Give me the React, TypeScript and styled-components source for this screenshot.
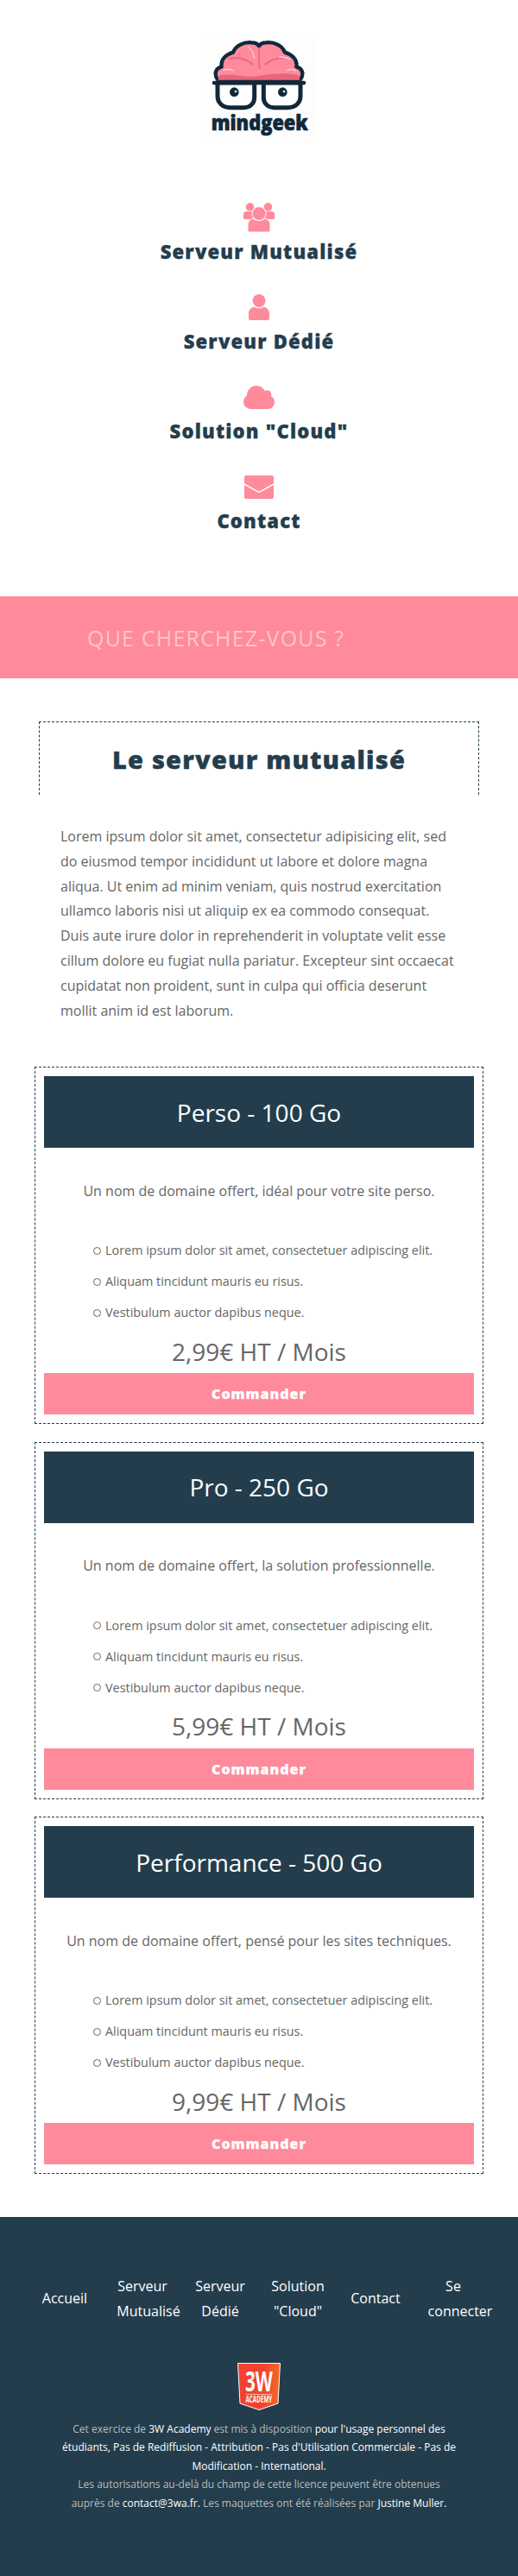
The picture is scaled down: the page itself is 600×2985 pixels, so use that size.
import React from 'react';
import styled, { createGlobalStyle } from 'styled-components';

const navy = '#233d4d';
const pink = '#fe8a9b';

const GlobalStyle = createGlobalStyle`
  * { box-sizing: border-box; }
  html, body { margin: 0; padding: 0; background: #fff; }
  body { font-family: "Open Sans", "Noto Sans", sans-serif; color: #666; font-size: 16px; }
`;

const Page = styled.div`
  width: 600px;
  height: 2985px;
  overflow: hidden;
`;

const Header = styled.header`
  padding-top: 40px;
  display: flex;
  flex-direction: column;
  align-items: center;
`;

const LogoSvg = styled.svg`
  display: block;
  width: 132px;
  height: 120px;
`;

const Nav = styled.nav`
  padding-top: 72px;
  display: flex;
  flex-direction: column;
  gap: 26px;
  align-items: center;
`;

const NavItem = styled.a`
  display: flex;
  flex-direction: column;
  align-items: center;
`;

const NavIcon = styled.div`
  height: 40px;
  display: flex;
  align-items: center;
  justify-content: center;
  svg { display: block; fill: ${pink}; }
`;

const NavLabel = styled.span`
  font-size: 22px;
  line-height: 38px;
  font-weight: 800;
  letter-spacing: 1.2px;
  -webkit-text-stroke: 0.35px ${navy};
  color: ${navy};
`;

const SearchBand = styled.div`
  margin-top: 69px;
  height: 95px;
  background: ${pink};
  display: flex;
  align-items: center;
  padding-left: 101px;
  font-size: 25px;
  letter-spacing: 1.2px;
  color: rgba(255, 255, 255, 0.5);
`;

const Main = styled.main`
  padding-top: 50px;
`;

const TitleBox = styled.div`
  margin: 0 45px;
  height: 85px;
  border: 1px dashed ${navy};
  border-bottom: none;
  display: flex;
  align-items: center;
  justify-content: center;
`;

const Title = styled.h1`
  margin: 0;
  font-size: 29px;
  font-weight: 800;
  letter-spacing: 1.2px;
  -webkit-text-stroke: 0.4px ${navy};
  color: ${navy};
`;

const Intro = styled.p`
  margin: 34px 0 0;
  padding: 0 72px 0 70px;
  line-height: 28.8px;
  color: #666;
`;

const Offers = styled.div`
  margin: 51px 40px 0;
  display: flex;
  flex-direction: column;
  gap: 20.5px;
`;

const Card = styled.article`
  border: 1px dashed ${navy};
  padding: 10px;
`;

const CardTitle = styled.h2`
  margin: 0;
  height: 83px;
  background: ${navy};
  color: #fff;
  font-size: 28px;
  font-weight: 400;
  display: flex;
  align-items: center;
  justify-content: center;
`;

const CardLead = styled.p`
  margin: 35.6px 0 0;
  line-height: 28.8px;
  text-align: center;
`;

const Features = styled.ul`
  margin: 36.6px 0 0;
  padding: 0 0 0 57px;
  list-style: none;
  font-size: 14.4px;
  line-height: 36px;
`;

const Feature = styled.li`
  display: flex;
  align-items: center;
  gap: 5px;
  &::before {
    content: '';
    width: 7px;
    height: 7px;
    border: 1px solid #666;
    border-radius: 50%;
  }
`;

const Price = styled.div`
  height: 52px;
  padding-top: 1px;
  font-size: 28px;
  display: flex;
  align-items: center;
  justify-content: center;
`;

const OrderButton = styled.button`
  display: block;
  width: 100%;
  height: 48px;
  border: none;
  background: ${pink};
  color: #fff;
  font-family: inherit;
  font-size: 16px;
  font-weight: 800;
  letter-spacing: 1px;
  -webkit-text-stroke: 0.25px #fff;
`;

const Footer = styled.footer`
  margin-top: 50px;
  height: 416px;
  background: ${navy};
  padding-top: 65.6px;
  display: flex;
  flex-direction: column;
  align-items: center;
`;

const FooterNav = styled.div`
  width: 100%;
  padding-left: 30px;
  display: grid;
  grid-template-columns: 90px 104px 62px 118px 62px 134px;
  align-items: center;
  color: #fff;
  line-height: 28.8px;
  text-align: center;
`;

const FooterLine = styled.span<{ $inset?: number }>`
  display: block;
  padding-right: ${(p) => p.$inset ?? 0}px;
  white-space: nowrap;
`;

const BadgeSvg = styled.svg`
  display: block;
  margin-top: 45px;
  width: 50px;
  height: 55px;
`;

const Legal = styled.p`
  margin: 11px 0 0;
  width: 500px;
  font-size: 12px;
  line-height: 21.6px;
  text-align: center;
  color: #bbb;
  b { font-weight: 400; color: #fff; }
`;

const Logo = () => (
  <LogoSvg viewBox="252 120 396 360">
    <rect x="252" y="120" width="396" height="360" fill="#fdfdfd" />
    <path
      d="M308 280 C292 258 298 238 320 232 C316 207 335 190 360 182 C368 160 395 145 425 148 C438 148 446 153 450 160 C454 153 462 148 475 148 C505 145 532 160 540 182 C565 190 584 207 580 232 C602 238 608 258 592 280 Z"
      fill="#fe8a9b"
      stroke="#10293a"
      strokeWidth="13"
      strokeLinejoin="round"
    />
    <path d="M312 262 C360 252 400 272 450 264 C500 256 540 252 588 262 L592 278 L308 278 Z" fill="#e8667c" />
    <path d="M450 165 C448 190 450 215 452 240 M430 225 C405 205 380 195 345 205 M470 225 C495 205 520 195 555 205" fill="none" stroke="#e8667c" strokeWidth="5" />
    <path d="M410 162 C425 170 432 185 434 205 M520 198 C535 198 548 200 558 208 M325 244 C335 240 350 240 362 246 M545 246 C555 240 570 240 580 246" fill="none" stroke="#ffd3d9" strokeWidth="4" />
    <path d="M294 288 H606" stroke="#10293a" strokeWidth="14" strokeLinecap="round" />
    <path d="M306 288 H434 V340 C434 360 418 374 398 374 H350 C324 374 306 358 306 334 Z" fill="#fff" stroke="#10293a" strokeWidth="15" strokeLinejoin="round" />
    <path d="M466 288 H594 V334 C594 358 576 374 550 374 H502 C482 374 466 360 466 340 Z" fill="#fff" stroke="#10293a" strokeWidth="15" strokeLinejoin="round" />
    <circle cx="364" cy="320" r="16" fill="#10293a" />
    <circle cx="369" cy="318" r="4" fill="#fff" />
    <circle cx="532" cy="320" r="16" fill="#10293a" />
    <circle cx="537" cy="318" r="4" fill="#fff" />
    <text transform="translate(284 452) scale(0.88 1)" textLength="382" lengthAdjust="spacingAndGlyphs" fontFamily="Open Sans, sans-serif" fontWeight="800" fontSize="72" fill="#10293a" stroke="#10293a" strokeWidth="2">
      mindgeek
    </text>
  </LogoSvg>
);

const UsersIcon = () => (
  <svg width="36" height="34" viewBox="0 0 36 34">
    <circle cx="7.5" cy="4.8" r="4.8" />
    <circle cx="28.5" cy="4.8" r="4.8" />
    <path d="M0 18 V13 C0 11 2 10 4 10 H12 V19 H1 C.4 19 0 18.6 0 18 Z" />
    <path d="M36 18 V13 C36 11 34 10 32 10 H24 V19 H35 C35.6 19 36 18.6 36 18 Z" />
    <path d="M5 32 V26 C5 21 8 19 11 18 C14 21 22 21 25 18 C28 19 31 21 31 26 V32 A2 2 0 0 1 29 34 H7 A2 2 0 0 1 5 32 Z" stroke="#fff" strokeWidth="1" />
    <circle cx="18" cy="12.5" r="8" stroke="#fff" strokeWidth="1" />
  </svg>
);

const UserIcon = () => (
  <svg width="24" height="30" viewBox="0 0 24 30">
    <circle cx="12" cy="7.5" r="7.5" />
    <path d="M0 28 V22 C0 18 3 15.5 6.5 14.5 C9 17 15 17 17.5 14.5 C21 15.5 24 18 24 22 V28 A2 2 0 0 1 22 30 H2 A2 2 0 0 1 0 28 Z" />
  </svg>
);

const CloudIcon = () => (
  <svg width="36" height="27" viewBox="0 0 36 27">
    <circle cx="15" cy="11" r="11" />
    <circle cx="27.5" cy="10" r="4.8" />
    <circle cx="8.5" cy="18.5" r="8.5" />
    <circle cx="28" cy="19" r="8" />
    <rect x="8" y="12" width="20" height="15" />
  </svg>
);

const MailIcon = () => (
  <svg width="34" height="27" viewBox="0 0 34 27">
    <rect width="34" height="27" rx="2" />
    <path d="M0 10 L15.5 18.6 Q17 19.4 18.5 18.6 L34 10" fill="none" stroke="#fff" strokeWidth="1.6" />
  </svg>
);

const Badge = () => (
  <BadgeSvg viewBox="0 0 50 55">
    <defs>
      <linearGradient id="badgeFill" x1="0" x2="1" y1="0" y2="0">
        <stop offset="0" stopColor="#f3412f" />
        <stop offset="0.6" stopColor="#f2432f" />
        <stop offset="1" stopColor="#f26a24" />
      </linearGradient>
    </defs>
    <path d="M.5 .5 H49.5 L47 47 L25 54.5 L3 47 Z" fill="url(#badgeFill)" stroke="#fff" strokeWidth="1" />
    <text transform="translate(9 33) scale(0.65 1)" textLength="49" lengthAdjust="spacingAndGlyphs" fontFamily="Open Sans, sans-serif" fontWeight="700" fontSize="32" fill="#fff">
      3W
    </text>
    <rect x="9.5" y="36" width="31" height="1" fill="#ffb9a8" />
    <text transform="translate(9.5 46) scale(0.67 1)" textLength="46" lengthAdjust="spacingAndGlyphs" fontFamily="Open Sans, sans-serif" fontWeight="700" fontSize="10" fill="#fff">
      ACADEMY
    </text>
  </BadgeSvg>
);

const navItems = [
  { icon: <UsersIcon />, label: 'Serveur Mutualisé' },
  { icon: <UserIcon />, label: 'Serveur Dédié' },
  { icon: <CloudIcon />, label: 'Solution "Cloud"' },
  { icon: <MailIcon />, label: 'Contact' },
];

const offers = [
  { title: 'Perso - 100 Go', lead: 'Un nom de domaine offert, idéal pour votre site perso.', price: '2,99€ HT / Mois' },
  { title: 'Pro - 250 Go', lead: 'Un nom de domaine offert, la solution professionnelle.', price: '5,99€ HT / Mois' },
  { title: 'Performance - 500 Go', lead: 'Un nom de domaine offert, pensé pour les sites techniques.', price: '9,99€ HT / Mois' },
];

const App: React.FC = () => (
  <Page>
    <GlobalStyle />
    <Header>
      <Logo />
    </Header>
    <Nav>
      {navItems.map((item) => (
        <NavItem key={item.label}>
          <NavIcon>{item.icon}</NavIcon>
          <NavLabel>{item.label}</NavLabel>
        </NavItem>
      ))}
    </Nav>
    <SearchBand>QUE CHERCHEZ-VOUS ?</SearchBand>
    <Main>
      <TitleBox>
        <Title>Le serveur mutualisé</Title>
      </TitleBox>
      <Intro>
        Lorem ipsum dolor sit amet, consectetur adipisicing elit, sed do eiusmod tempor incididunt ut labore et dolore
        magna aliqua. Ut enim ad minim veniam, quis nostrud exercitation ullamco laboris nisi ut aliquip ex ea commodo
        consequat. Duis aute irure dolor in reprehenderit in voluptate velit esse cillum dolore eu fugiat nulla
        pariatur. Excepteur sint occaecat cupidatat non proident, sunt in culpa qui officia deserunt mollit anim id est
        laborum.
      </Intro>
      <Offers>
        {offers.map((offer) => (
          <Card key={offer.title}>
            <CardTitle>{offer.title}</CardTitle>
            <CardLead>{offer.lead}</CardLead>
            <Features>
              <Feature>Lorem ipsum dolor sit amet, consectetuer adipiscing elit.</Feature>
              <Feature>Aliquam tincidunt mauris eu risus.</Feature>
              <Feature>Vestibulum auctor dapibus neque.</Feature>
            </Features>
            <Price>{offer.price}</Price>
            <OrderButton>Commander</OrderButton>
          </Card>
        ))}
      </Offers>
    </Main>
    <Footer>
      <FooterNav>
        <div>Accueil</div>
        <div>
          <FooterLine $inset={14}>Serveur</FooterLine>
          <FooterLine>Mutualisé</FooterLine>
        </div>
        <div>
          <FooterLine>Serveur</FooterLine>
          <FooterLine>Dédié</FooterLine>
        </div>
        <div>
          <FooterLine>Solution</FooterLine>
          <FooterLine>"Cloud"</FooterLine>
        </div>
        <div>Contact</div>
        <div>
          <FooterLine $inset={16}>Se</FooterLine>
          <FooterLine>connecter</FooterLine>
        </div>
      </FooterNav>
      <Badge />
      <Legal>
        Cet exercice de <b>3W Academy</b> est mis à disposition <b>pour l'usage personnel des</b>
        <br />
        <b>étudiants, Pas de Rediffusion - Attribution - Pas d'Utilisation Commerciale - Pas de</b>
        <br />
        <b>Modification - International.</b>
        <br />
        Les autorisations au-delà du champ de cette licence peuvent être obtenues
        <br />
        auprès de <b>contact@3wa.fr.</b> Les maquettes ont été réalisées par <b>Justine Muller.</b>
      </Legal>
    </Footer>
  </Page>
);

export default App;
